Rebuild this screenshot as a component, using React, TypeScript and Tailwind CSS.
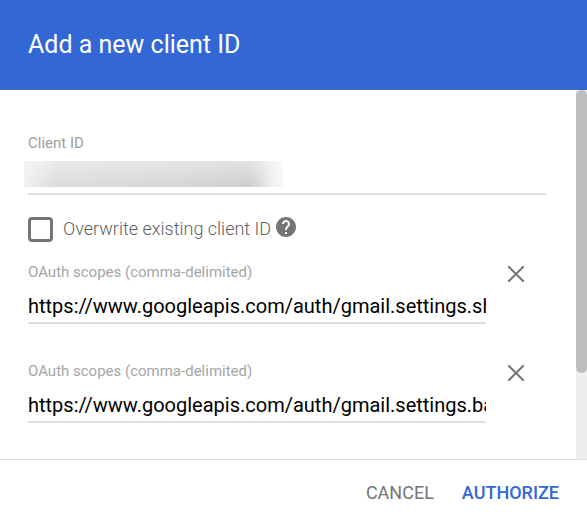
import { useState } from "react";

const initialScopes = [
    "https://www.googleapis.com/auth/gmail.settings.sharing",
    "https://www.googleapis.com/auth/gmail.settings.basic",
];

function ScopeField({ id, value, onChange, onRemove }: {
    id: string;
    value: string;
    onChange: (value: string) => void;
    onRemove: () => void;
}) {
    return (
        <div className="flex items-start">
            <div className="flex-1 min-w-0">
                <label htmlFor={id} className="block text-[15px] leading-5 text-[#a6a6a6]">
                    OAuth scopes (comma-delimited)
                </label>
                <input
                    id={id}
                    type="text"
                    value={value}
                    onChange={(e) => onChange(e.target.value)}
                    className="block w-full h-[42px] pt-2 text-xl text-black border-b-2 border-[#dedede] outline-none focus:border-[#3367d6]"
                />
            </div>
            <button type="button" aria-label="Remove scope" onClick={onRemove} className="ml-[22px] mr-[22px] mt-1">
                <svg width="16" height="16" viewBox="0 0 16 16" stroke="#757575" strokeWidth="2" strokeLinecap="round">
                    <path d="M0 0L16 16M16 0L0 16" />
                </svg>
            </button>
        </div>
    );
}

export default function App() {
    const [clientId, setClientId] = useState("");
    const [overwrite, setOverwrite] = useState(false);
    const [scopes, setScopes] = useState(initialScopes);

    return (
        <div role="dialog" aria-labelledby="title" className="min-h-screen flex flex-col bg-white font-['Roboto',sans-serif]">
            <header className="bg-[#3367d6] px-7 h-[90px] flex items-center">
                <h1 id="title" className="text-[25px] text-white">Add a new client ID</h1>
            </header>

            <div className="flex-1 flex">
                <main className="flex-1 min-w-0 pl-7 pr-[30px] pt-[43px] pb-9">
                    <label htmlFor="client-id" className="block text-[15px] leading-5 text-[#9e9e9e]">Client ID</label>
                    <div className="relative">
                        <input
                            id="client-id"
                            type="text"
                            value={clientId}
                            onChange={(e) => setClientId(e.target.value)}
                            className="block w-full h-[42px] text-xl text-black border-b-2 border-[#dedede] outline-none focus:border-[#3367d6]"
                        />
                        {/* hidden value */}
                        <div className="absolute -left-1 top-2 w-[259px] h-[26px] bg-[linear-gradient(90deg,#efefef_0%,#e9e9e9_5%,#dcdcdc_12%,#dadada_25%,#d8d8d8_40%,#d5d5d5_60%,#d0d0d0_80%,#cecece_87%,#dedede_92%,#f0f0f0_96%,#f7f7f7_100%)]">
                            <div className="w-full h-full bg-linear-to-b from-white/40 to-transparent"></div>
                        </div>
                    </div>

                    <div className="flex items-center mt-[22px] h-[25px]">
                        <input
                            id="overwrite"
                            type="checkbox"
                            checked={overwrite}
                            onChange={(e) => setOverwrite(e.target.checked)}
                            className="appearance-none w-[25px] h-[25px] border-3 border-[#757575] rounded-sm checked:bg-[#3367d6]"
                        />
                        <label htmlFor="overwrite" className="ml-[10px] pb-[2px] text-lg font-light text-[#616161]">Overwrite existing client ID</label>
                        <button type="button" aria-label="Help" className="ml-[5px] mb-[6px]">
                            <svg width="20" height="20" viewBox="2 2 20 20" fill="#757575">
                                <path d="M12 2C6.48 2 2 6.48 2 12s4.48 10 10 10 10-4.48 10-10S17.52 2 12 2zm1 17h-2v-2h2v2zm2.07-7.75l-.9.92C13.45 12.9 13 13.5 13 15h-2v-.5c0-1.1.45-2.1 1.17-2.83l1.24-1.26c.37-.36.59-.86.59-1.41 0-1.1-.9-2-2-2s-2 .9-2 2H8c0-2.21 1.79-4 4-4s4 1.79 4 4c0 .88-.36 1.68-.93 2.25z" />
                            </svg>
                        </button>
                    </div>

                    <div className="flex flex-col gap-[37px] mt-5">
                        {scopes.map((scope, i) => (
                            <ScopeField
                                key={i}
                                id={`scope-${i}`}
                                value={scope}
                                onChange={(value) => setScopes(scopes.map((s, n) => (n === i ? value : s)))}
                                onRemove={() => setScopes(scopes.filter((_, n) => n !== i))}
                            />
                        ))}
                    </div>
                </main>

                {/* Scrollbar */}
                <div className="w-[11px] bg-[#eeeeee]">
                    <div className="h-[283px] bg-[#bdbdbd] rounded-full"></div>
                </div>
            </div>

            <footer className="h-16 border-t border-[#dedede] flex items-center justify-end gap-7 px-7 pt-[2px]">
                <button type="button" className="text-lg text-[#757575]">CANCEL</button>
                <button type="button" className="text-lg font-medium text-[#3367d6]">AUTHORIZE</button>
            </footer>
        </div>
    );
}
